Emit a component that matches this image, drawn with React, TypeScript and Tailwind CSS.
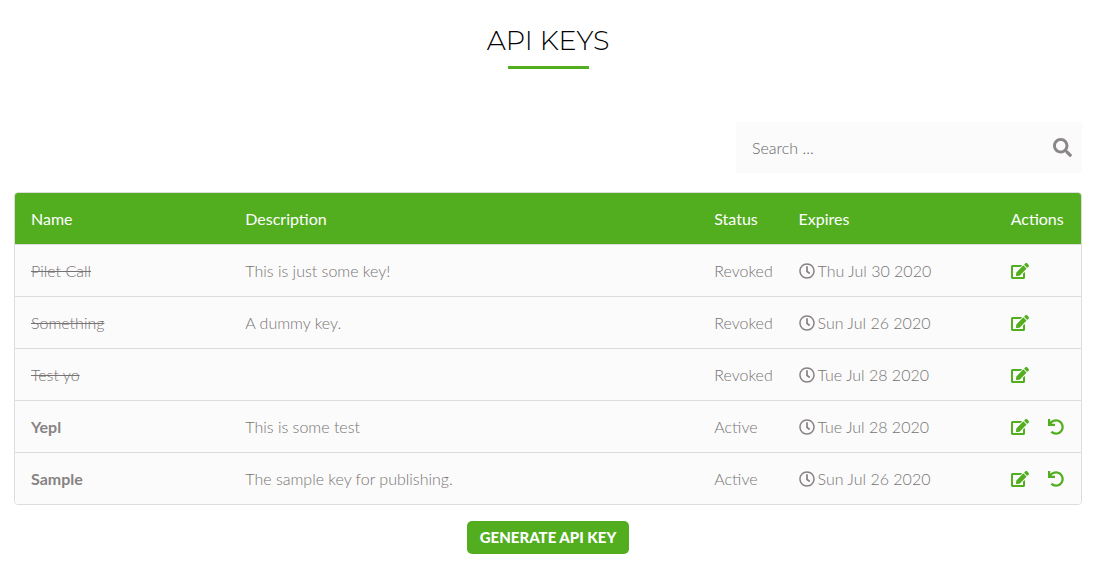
import { FaEdit, FaRegClock, FaSearch, FaUndo } from "react-icons/fa";

type ApiKey = {
  name: string;
  description: string;
  active: boolean;
  expires: string;
};

const keys: ApiKey[] = [
  { name: "Pilet Call", description: "This is just some key!", active: false, expires: "Thu Jul 30 2020" },
  { name: "Something", description: "A dummy key.", active: false, expires: "Sun Jul 26 2020" },
  { name: "Test yo", description: "", active: false, expires: "Tue Jul 28 2020" },
  { name: "Yepl", description: "This is some test", active: true, expires: "Tue Jul 28 2020" },
  { name: "Sample", description: "The sample key for publishing.", active: true, expires: "Sun Jul 26 2020" },
];

function KeyRow({ item }: { item: ApiKey }) {
  return (
    <tr className="h-[52px] bg-[#fbfbfb]">
      <td className="border-t border-[#dddddd] pl-4">
        {item.active ? <span className="font-bold text-[#888383]">{item.name}</span> : <del>{item.name}</del>}
      </td>
      <td className="border-t border-[#dddddd] pl-4">{item.description}</td>
      <td className="border-t border-[#dddddd] pl-4">{item.active ? "Active" : "Revoked"}</td>
      <td className="border-t border-[#dddddd] pl-4">
        <span className="flex items-center gap-[3px]">
          <FaRegClock className="size-4 text-[#888383]" />
          {item.expires}
        </span>
      </td>
      <td className="border-t border-[#dddddd] pl-4">
        <span className="flex items-center gap-[19px] text-[#52ae1f]">
          <button type="button" aria-label={`Edit ${item.name}`}>
            <FaEdit className="h-4 w-[18px]" />
          </button>
          {item.active && (
            <button type="button" aria-label={`Revoke ${item.name}`}>
              <FaUndo className="size-4" />
            </button>
          )}
        </span>
      </td>
    </tr>
  );
}

export default function App() {
  return (
    <main className="bg-white pt-6 pr-[17px] pl-[14px] font-['Lato',sans-serif] text-base font-light text-[#777373]">
      <h1 className="text-center font-['Montserrat','Inter',sans-serif] text-[27px] leading-[34px] font-light text-black">
        API KEYS
      </h1>
      <div className="mx-auto mt-2 h-[3px] w-[81px] bg-[#52ae1f]" />
      <form className="mt-[53px] ml-auto flex h-[51px] w-[346px] items-center bg-[#fbfbfb] pr-[10px] pl-4" role="search">
        <input
          type="text"
          aria-label="Search"
          placeholder="Search ..."
          className="min-w-0 flex-1 bg-transparent outline-none placeholder:text-[#666666]"
        />
        <button type="button" aria-label="Search">
          <FaSearch className="size-[19px] text-[#8c8787]" />
        </button>
      </form>
      <div className="mt-[19px] overflow-hidden rounded border border-[#dddddd]">
        <table className="w-full table-fixed border-separate border-spacing-0 text-left">
          <colgroup>
            <col className="w-[20.1%]" />
            <col className="w-[44%]" />
            <col className="w-[7.9%]" />
            <col className="w-[19.9%]" />
            <col className="w-[8.1%]" />
          </colgroup>
          <thead>
            <tr className="h-[51px] bg-[#52ae1f] text-white">
              <th className="pl-4 font-normal">Name</th>
              <th className="pl-4 font-normal">Description</th>
              <th className="pl-4 font-normal">Status</th>
              <th className="pl-4 font-normal">Expires</th>
              <th className="pl-4 font-normal">Actions</th>
            </tr>
          </thead>
          <tbody>
            {keys.map((item) => (
              <KeyRow key={item.name} item={item} />
            ))}
          </tbody>
        </table>
      </div>
      <div className="mt-4 flex justify-center pb-3">
        <button type="button" className="h-[33px] rounded-[5px] bg-[#52ae1f] px-[13px] text-[15px] font-black text-white">
          GENERATE API KEY
        </button>
      </div>
    </main>
  );
}
